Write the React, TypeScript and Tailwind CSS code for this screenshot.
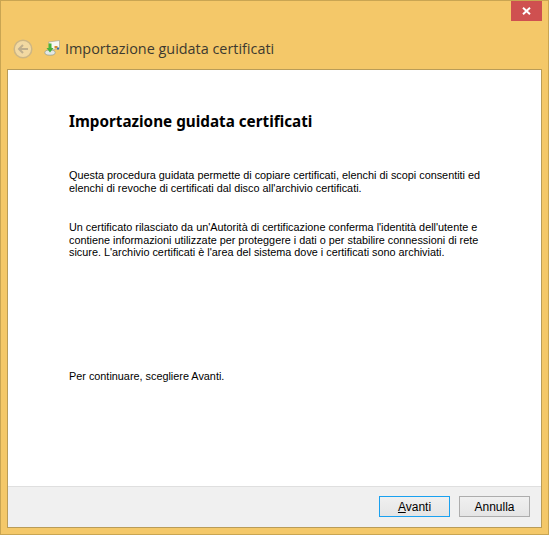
const bodyFont = "font-['Liberation_Sans',sans-serif]";

function BackIcon() {
  return (
    <svg width="20" height="20" viewBox="0 0 20 20" className="shrink-0">
      <circle cx="10" cy="10" r="8.8" fill="#f2d9a2" stroke="#cdb684" strokeWidth="1.5" />
      <path d="M15 10H6.5M10 6l-4 4 4 4" fill="none" stroke="#bfae8c" strokeWidth="2" />
    </svg>
  );
}

function WizardIcon() {
  return (
    <svg width="17" height="16" viewBox="0 0 17 16" className="shrink-0">
      <path d="M4.5 2 15.5 0.5V8.5L8 10z" fill="#f7f7f2" stroke="#a9a994" strokeWidth="0.7" />
      <rect x="10.5" y="6" width="3" height="2.5" fill="#d68a2a" />
      <rect x="13" y="7.5" width="2" height="2" fill="#3b6fb0" />
      <ellipse cx="6" cy="12.6" rx="5.2" ry="2.6" fill="#e4e8e4" stroke="#8b9a92" strokeWidth="0.7" />
      <path d="M4.5 3.5H7.5V8H9.5L6 12.5 2.5 8H4.5z" fill="#46b23c" />
    </svg>
  );
}

function WizardButton({ focused, children }: { focused?: boolean; children: React.ReactNode }) {
  return (
    <button
      className={`w-[71px] h-[21px] border flex items-center justify-center text-[12px] text-black bg-gradient-to-b from-[#f0f0f0] to-[#e5e5e5] ${bodyFont} ${
        focused ? "border-[#1aa1f0]" : "border-[#adadad]"
      }`}
    >
      {children}
    </button>
  );
}

export default function App() {
  return (
    <div className="w-[549px] h-[535px] flex flex-col border border-[#c9a552] bg-[#f4c869]">
      <div className="h-[20px] flex justify-end pr-[6px] shrink-0">
        <button className="w-[31px] h-[20px] bg-[#cf5050] flex items-center justify-center">
          <svg width="9" height="8" viewBox="0 0 9 8">
            <path d="M1 0.8 8 7.2M8 0.8 1 7.2" stroke="#fff" strokeWidth="2" />
          </svg>
        </button>
      </div>

      <div className="h-[48px] flex items-start pl-[12px] pt-[18px] shrink-0">
        <BackIcon />
        <div className="ml-[11px] mt-[1px]">
          <WizardIcon />
        </div>
        <span className="ml-[4px] -mt-[1px] text-[14.4px] leading-[22px] text-[#3d3a30] font-['Open_Sans',sans-serif]">
          Importazione guidata certificati
        </span>
      </div>

      <div className="flex-1 mx-[6px] mb-[6px] flex flex-col border border-[#b99c58] min-h-0">
        <div className={`flex-1 bg-white pl-[61px] pr-[50px] text-black ${bodyFont}`}>
          <h1 className="mt-[41px] text-[15.25px] leading-[20px] font-bold font-['Noto_Sans',sans-serif]">
            Importazione guidata certificati
          </h1>
          <p className="mt-[38px] text-[10.85px] leading-[13px]">
            Questa procedura guidata permette di copiare certificati, elenchi di scopi consentiti ed
            elenchi di revoche di certificati dal disco all'archivio certificati.
          </p>
          <p className="mt-[26px] text-[10.85px] leading-[12.6px]">
            Un certificato rilasciato da un'Autorità di certificazione conferma l'identità dell'utente e
            contiene informazioni utilizzate per proteggere i dati o per stabilire connessioni di rete
            sicure. L'archivio certificati è l'area del sistema dove i certificati sono archiviati.
          </p>
          <p className="mt-[111px] text-[10.85px] leading-[13px]">Per continuare, scegliere Avanti.</p>
        </div>
        <div className="h-[41px] shrink-0 bg-[#f0f0f0] border-t border-[#dfdfdf] flex items-start justify-end gap-[9px] pt-[9px] pr-[11px]">
          <WizardButton focused>
            <span>
              <span className="underline">A</span>vanti
            </span>
          </WizardButton>
          <WizardButton>Annulla</WizardButton>
        </div>
      </div>
    </div>
  );
}
